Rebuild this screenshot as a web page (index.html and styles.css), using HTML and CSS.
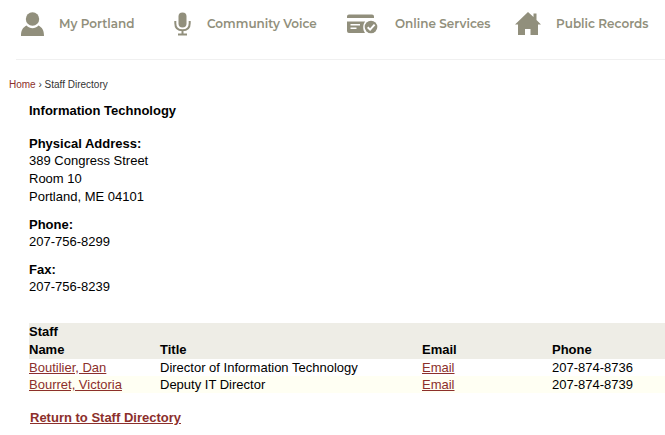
FILE: index.html
```html
<!DOCTYPE html>
<html lang="en">
<head>
<meta charset="utf-8">
<meta name="viewport" content="width=device-width, initial-scale=1">
<title>Staff Directory - Information Technology</title>
<link rel="stylesheet" href="styles.css">
</head>
<body>
<header class="site-header">
  <nav class="quick-links" aria-label="Quick links">
    <a class="quick-link" href="#portland">
      <svg width="23" height="24" viewBox="0 0 23 24" aria-hidden="true"><circle cx="11.500" cy="7" r="6.700"/><path d="M0 24C0 18 2 15.500 5.500 13.500C9 17.200 14 17.200 17.500 13.500C21 15.500 23 18 23 24Z"/></svg>
      <span>My Portland</span>
    </a>
    <a class="quick-link" href="#voice">
      <svg width="18" height="24" viewBox="0 0 18 24" aria-hidden="true"><rect x="4.500" y="0.500" width="8" height="15" rx="4"/><path class="stroke" d="M1.300 9v2.200c0 4.600 3 7 7.200 7s7.200-2.400 7.200-7V9M8.500 18v4M4 22.600h9"/></svg>
      <span>Community Voice</span>
    </a>
    <a class="quick-link" href="#services">
      <svg width="33" height="24" viewBox="0 0 33 24" aria-hidden="true"><path d="M0 6V4.500Q0 2.500 2 2.500H25Q27 2.500 27 4.500V6ZM0 9.500H18.200C15.700 12.500 15.500 17.500 18 21H2Q0 21 0 19ZM3.500 12v1.500H13V12ZM3.500 15.500V17H9.500V15.500Z" fill-rule="evenodd"/><circle cx="24" cy="15" r="6.300"/><path class="check" d="M20.700 15.200l2.400 2.400 4.500-5"/></svg>
      <span>Online Services</span>
    </a>
    <a class="quick-link" href="#records">
      <svg width="26" height="24" viewBox="0 0 26 24" aria-hidden="true"><path d="M13 0L0 12.500H3V23H10V17H15.500V23H23V12.500H26L21.500 8V1.500H18.500V5Z"/></svg>
      <span>Public Records</span>
    </a>
  </nav>
</header>
<main>
  <nav class="breadcrumb" aria-label="Breadcrumb"><a href="#home">Home</a> › <span>Staff Directory</span></nav>
  <div class="content">
    <h1>Information Technology</h1>
    <section class="detail">
      <h2>Physical Address:</h2>
      <address>389 Congress Street<br>Room 10<br>Portland, ME 04101</address>
    </section>
    <section class="detail">
      <h2>Phone:</h2>
      <p>207-756-8299</p>
    </section>
    <section class="detail">
      <h2>Fax:</h2>
      <p>207-756-8239</p>
    </section>
    <table class="staff">
      <colgroup><col class="col-name"><col class="col-title"><col class="col-email"><col></colgroup>
      <thead>
        <tr><th colspan="4" scope="colgroup">Staff</th></tr>
        <tr><th scope="col">Name</th><th scope="col">Title</th><th scope="col">Email</th><th scope="col">Phone</th></tr>
      </thead>
      <tbody>
        <tr><td><a href="#boutilier">Boutilier, Dan</a></td><td>Director of Information Technology</td><td><a href="#email-boutilier">Email</a></td><td>207-874-8736</td></tr>
        <tr><td><a href="#bourret">Bourret, Victoria</a></td><td>Deputy IT Director</td><td><a href="#email-bourret">Email</a></td><td>207-874-8739</td></tr>
      </tbody>
    </table>
    <p class="return"><a href="#directory">Return to Staff Directory</a></p>
  </div>
</main>
</body>
</html>
```

FILE: styles.css
```css
* {
  box-sizing: border-box;
}

body {
  margin: 0;
  background: #fff;
  color: #000;
  font: 13px/18px "Liberation Sans", Arial, sans-serif;
}

h1, h2, p {
  margin: 0;
  font-size: inherit;
}

a {
  color: #8c2f2b;
}

.site-header {
  margin-left: 16px;
  padding: 12px 0 23px 5px;
  border-bottom: 1px solid #f0f0f0;
}

.quick-links {
  display: grid;
  grid-template-columns: 153fr 173fr 168fr 150fr;
}

.quick-link {
  display: flex;
  align-items: center;
  gap: 15px;
  color: #918f7c;
  font: 600 12px/24px Montserrat, Inter, sans-serif;
  text-decoration: none;
  white-space: nowrap;
}

.quick-link svg {
  flex: none;
  fill: #918f7c;
}

.quick-link .stroke {
  fill: none;
  stroke: #918f7c;
  stroke-width: 2;
}

.quick-link .check {
  fill: none;
  stroke: #fff;
  stroke-width: 2;
}

.breadcrumb {
  padding: 17px 0 0 9px;
  color: #333;
  font-size: 10px;
  line-height: 16px;
}

.breadcrumb a {
  text-decoration: none;
}

.content {
  padding: 9px 0 8px 29px;
}

.detail {
  margin-top: 10px;
}

h1 + .detail {
  margin-top: 15px;
}

.detail h2 {
  line-height: 17px;
}

address {
  font-style: normal;
}

.staff {
  width: 100%;
  margin-top: 27px;
  border-collapse: collapse;
  table-layout: fixed;
  line-height: 17px;
}

.staff th,
.staff td {
  padding: 0;
  text-align: left;
  white-space: nowrap;
}

.staff thead {
  background: #eeede6;
  line-height: 18px;
}

.staff tbody tr:nth-child(even) {
  background: #fffff3;
}

.col-name {
  width: 131px;
}

.col-title {
  width: 262px;
}

.col-email {
  width: 130px;
}

.return {
  padding: 16px 0 0 1px;
  font-weight: bold;
}
```
